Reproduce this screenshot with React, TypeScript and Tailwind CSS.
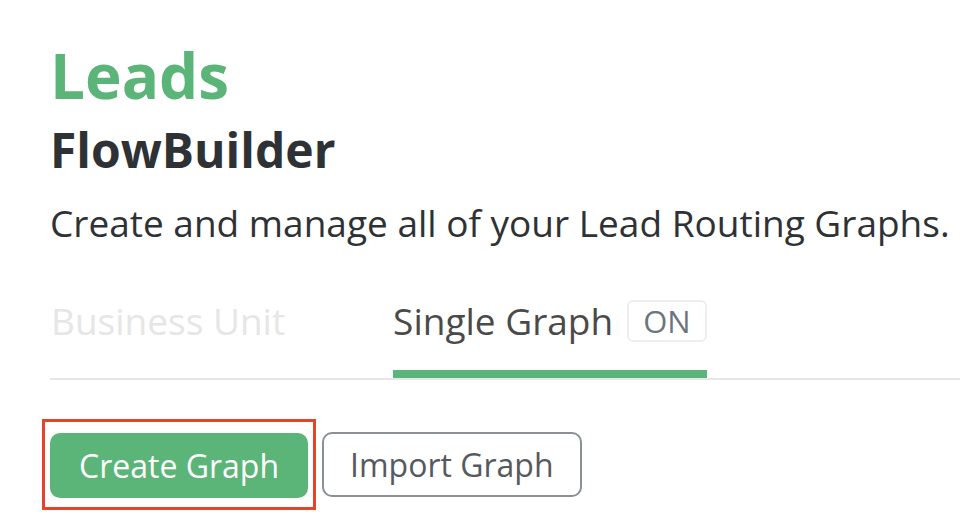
export default function App() {
  return (
    <div className="h-[520px] w-[960px] overflow-hidden bg-white font-['Open_Sans',sans-serif]">
      <div className="pl-[50px] pt-[34px]">
        <h1 className="text-[62px] font-bold leading-[82px] text-[#5cb578]">Leads</h1>
        <h2 className="mt-[2px] text-[48px] font-bold leading-[64px] text-[#2f3235]">FlowBuilder</h2>
        <p className="mt-[17px] whitespace-nowrap text-[37px] leading-[48px] text-[#2f3235]">
          Create and manage all of your Lead Routing Graphs.
        </p>
      </div>

      <div className="mt-[50px] ml-[50px] flex items-end border-b-2 border-[#e6e6e6]">
        <div className="pb-[33px] pl-[1px] text-[37px] leading-[48px] text-[#e6e6e6]">Business Unit</div>
        <div className="ml-[108px] flex items-center gap-[14px] border-b-8 border-[#5cb578] pb-[25px]">
          <span className="text-[37px] leading-[48px] text-[#4a4a4a]">Single Graph</span>
          <span className="rounded-[6px] border-2 border-[#eceef0] px-[14px] text-[31px] leading-[38px] text-[#6c757d]">
            ON
          </span>
        </div>
      </div>

      <div className="mt-[39px] ml-[42px] flex items-center gap-[6px]">
        <div className="border-[3px] border-[#e5432b] px-[5px] pt-[11px] pb-[9px]">
          <button
            type="button"
            className="h-[65px] rounded-[10px] bg-[#5cb578] px-[29px] text-[32px] text-white"
          >
            Create Graph
          </button>
        </div>
        <button
          type="button"
          className="h-[65px] rounded-[10px] border-2 border-[#8a9094] px-[26px] text-[32px] text-[#555a5e]"
        >
          Import Graph
        </button>
      </div>
    </div>
  );
}
